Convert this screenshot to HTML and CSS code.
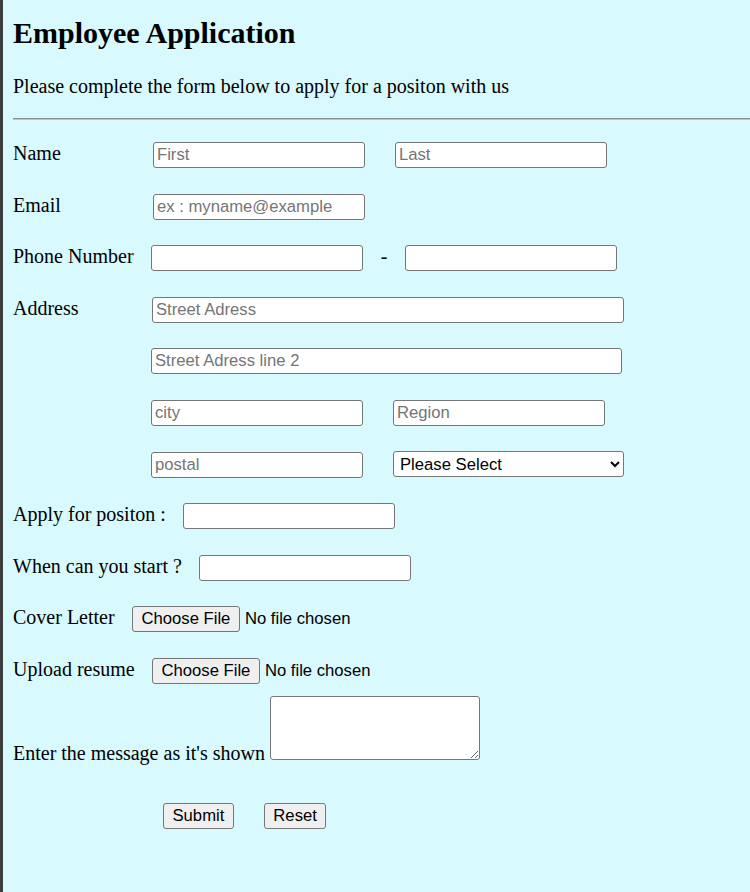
FILE: index.html
```html
<!DOCTYPE html>
<html lang="en">
<head>
<meta charset="utf-8">
<title>Employee Application</title>
<link rel="stylesheet" href="styles.css">
</head>
<body>
<h2 class="title">Employee Application</h2>
<p class="intro">Please complete the form below to apply for a positon with us</p>
<hr class="rule">
<form class="form">
  <div class="row">
    <label class="label w-name">Name</label>
    <input class="field" type="text" placeholder="First">
    <input class="field gap-left" type="text" placeholder="Last">
  </div>
  <div class="row">
    <label class="label w-name">Email</label>
    <input class="field" type="email" placeholder="ex : myname@example">
  </div>
  <div class="row">
    <label class="label w-phone">Phone Number</label>
    <input class="field" type="text">
    <span class="dash">-</span>
    <input class="field" type="text">
  </div>
  <div class="row">
    <label class="label w-address">Address</label>
    <input class="field street" type="text" placeholder="Street Adress">
  </div>
  <div class="row indent">
    <input class="field street2" type="text" placeholder="Street Adress line 2">
  </div>
  <div class="row indent">
    <input class="field" type="text" placeholder="city">
    <input class="field gap-left" type="text" placeholder="Region">
  </div>
  <div class="row indent">
    <input class="field" type="text" placeholder="postal">
    <select class="field choice gap-left">
      <option>Please Select</option>
      <option>Alberta</option>
      <option>British Columbia</option>
      <option>Ontario</option>
    </select>
  </div>
  <div class="row">
    <label class="label w-apply">Apply for positon :</label>
    <input class="field" type="text">
  </div>
  <div class="row">
    <label class="label w-start">When can you start ?</label>
    <input class="field" type="text">
  </div>
  <div class="row">
    <label class="label w-cover">Cover Letter</label>
    <input class="file" type="file">
  </div>
  <div class="row">
    <label class="label w-resume">Upload resume</label>
    <input class="file" type="file">
  </div>
  <div class="message">
    <label class="label-inline">Enter the message as it's shown</label> <textarea class="area"></textarea>
  </div>
  <div class="actions">
    <button class="btn" type="submit">Submit</button>
    <button class="btn" type="reset">Reset</button>
  </div>
</form>
</body>
</html>
```
FILE: styles.css
```css
html {
  background: #d8f9fe;
}

body {
  box-sizing: border-box;
  min-height: 100vh;
  margin: 0;
  padding: 16px 0 0 10px;
  border-left: 3px solid #3d3d3d;
  background: #d8f9fe;
  color: #000;
  font-family: "Liberation Serif", "Times New Roman", serif;
  font-size: 20px;
  line-height: 23px;
}

.title {
  margin: 0;
  font-size: 30px;
  line-height: 34px;
  font-weight: bold;
}

.intro {
  margin: 25px 0 0;
}

.rule {
  margin: 20px 0 0;
  height: 0;
  border: 0;
  border-top: 1px solid #8c8c8c;
  border-bottom: 1px solid #b9c4c6;
}

.form {
  margin-top: 22px;
}

.row {
  display: flex;
  align-items: baseline;
}

.row + .row {
  margin-top: 25.5px;
}

.indent {
  padding-left: 138px;
}

.label {
  flex: none;
}

.w-name { width: 140px; }
.w-phone { width: 138px; }
.w-address { width: 139px; }
.w-apply { width: 170px; }
.w-start { width: 186px; }
.w-cover { width: 119px; }
.w-resume { width: 139px; }

.field {
  box-sizing: border-box;
  width: 212px;
  height: 26px;
  margin: 0;
  padding: 0 3px;
  border: 1px solid #767676;
  border-radius: 3px;
  background: #fff;
  color: #000;
  font-family: "Liberation Sans", Arial, sans-serif;
  font-size: 16.67px;
}

.field::placeholder {
  color: #757575;
}

.gap-left {
  margin-left: 30px;
}

.dash {
  width: 42px;
  text-align: center;
}

.street {
  width: 472px;
}

.street2 {
  width: 471px;
}

.choice {
  width: 231px;
  padding: 0 2px;
}

.file {
  margin: 0;
  font-family: "Liberation Sans", Arial, sans-serif;
  font-size: 16.67px;
  color: #000;
}

.file::file-selector-button {
  box-sizing: border-box;
  height: 26px;
  margin: 0 5px 0 0;
  padding: 0 8.5px;
  border: 1px solid #767676;
  border-radius: 3px;
  background: #efefef;
  color: #000;
  font-family: "Liberation Sans", Arial, sans-serif;
  font-size: 16.67px;
}

.message {
  margin-top: 12px;
}

.area {
  box-sizing: border-box;
  width: 210px;
  height: 64px;
  margin: 0;
  border: 1px solid #767676;
  border-radius: 3px;
  background: #fff;
}

.actions {
  display: flex;
  gap: 30px;
  margin-top: 38px;
  padding-left: 150px;
}

.btn {
  box-sizing: border-box;
  height: 26px;
  margin: 0;
  padding: 0 8.5px;
  border: 1px solid #767676;
  border-radius: 3px;
  background: #efefef;
  color: #000;
  font-family: "Liberation Sans", Arial, sans-serif;
  font-size: 16.67px;
}
```
